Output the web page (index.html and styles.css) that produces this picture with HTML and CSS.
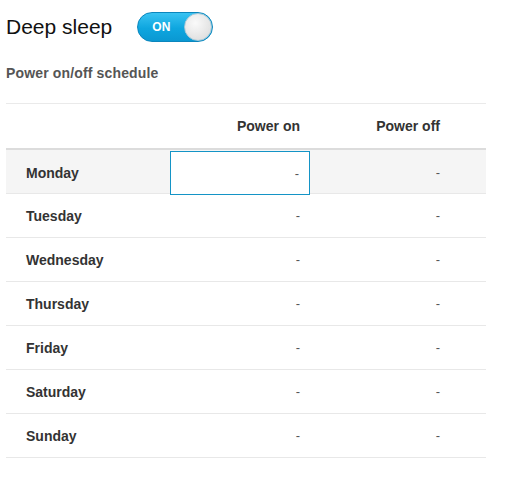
FILE: index.html
```html
<!DOCTYPE html>
<html>
<head>
<meta charset="utf-8">
<link rel="stylesheet" href="styles.css">
</head>
<body>
<div class="page">
  <div class="title-row">
    <span class="title">Deep sleep</span>
    <div class="toggle"><span class="toggle-label">ON</span><span class="knob"></span></div>
  </div>
  <div class="subtitle">Power on/off schedule</div>
  <div class="table">
    <div class="row head">
      <div class="cell day"></div>
      <div class="cell val">Power on</div>
      <div class="cell val">Power off</div>
      <div class="cell"></div>
    </div>
    <div class="row body alt">
      <div class="cell day">Monday</div>
      <div class="cell val selected">-</div>
      <div class="cell val">-</div>
      <div class="cell"></div>
    </div>
    <div class="row body">
      <div class="cell day">Tuesday</div>
      <div class="cell val">-</div>
      <div class="cell val">-</div>
      <div class="cell"></div>
    </div>
    <div class="row body">
      <div class="cell day">Wednesday</div>
      <div class="cell val">-</div>
      <div class="cell val">-</div>
      <div class="cell"></div>
    </div>
    <div class="row body">
      <div class="cell day">Thursday</div>
      <div class="cell val">-</div>
      <div class="cell val">-</div>
      <div class="cell"></div>
    </div>
    <div class="row body">
      <div class="cell day">Friday</div>
      <div class="cell val">-</div>
      <div class="cell val">-</div>
      <div class="cell"></div>
    </div>
    <div class="row body">
      <div class="cell day">Saturday</div>
      <div class="cell val">-</div>
      <div class="cell val">-</div>
      <div class="cell"></div>
    </div>
    <div class="row body">
      <div class="cell day">Sunday</div>
      <div class="cell val">-</div>
      <div class="cell val">-</div>
      <div class="cell"></div>
    </div>
  </div>
</div>
</body>
</html>
```
FILE: styles.css
```css
html, body {
  margin: 0;
  padding: 0;
  background: #fff;
}
body {
  font-family: "Liberation Sans", Arial, sans-serif;
}
.page {
  padding: 12px 19px 0 6px;
}
.title-row {
  display: flex;
  align-items: center;
  height: 30px;
}
.title {
  font-size: 21px;
  color: #111;
  margin-right: 25px;
  line-height: 30px;
}
.toggle {
  box-sizing: border-box;
  width: 76px;
  height: 30px;
  border-radius: 15px;
  background: linear-gradient(#39c3f2, #0ea6df 55%, #0a98d2);
  border: 1px solid #0b86bd;
  display: flex;
  align-items: center;
  justify-content: space-between;
  padding: 0 0 0 14px;
}
.toggle-label {
  color: #fff;
  font-weight: bold;
  font-size: 12px;
  letter-spacing: 0.2px;
}
.knob {
  box-sizing: border-box;
  width: 28px;
  height: 28px;
  border-radius: 50%;
  background: radial-gradient(circle at 40% 35%, #fafafa, #e2e2e2 70%, #d4d4d4);
  border: 1px solid #a9c9d8;
}
.subtitle {
  margin-top: 24px;
  font-size: 14px;
  font-weight: bold;
  color: #555;
  line-height: 15px;
  letter-spacing: 0.15px;
}
.table {
  margin-top: 22px;
  border-top: 1px solid #eaeaea;
}
.row {
  display: grid;
  grid-template-columns: 164px 140px 140px 1fr;
  font-size: 14px;
}
.row.head {
  height: 44px;
  border-bottom: 2px solid #dcdcdc;
  font-weight: bold;
  color: #333;
}
.row.body {
  height: 43px;
  border-bottom: 1px solid #e8e8e8;
}
.row.alt {
  background: #f5f5f5;
}
.cell {
  display: flex;
  align-items: center;
  box-sizing: border-box;
}
.day {
  padding-left: 20px;
  font-weight: bold;
  color: #333;
}
.val {
  justify-content: flex-end;
  padding-right: 10px;
  color: #555;
  font-size: 13px;
}
.head .val {
  color: #333;
  font-size: 14px;
}
.selected {
  background: #fff;
  border: 1px solid #1494c6;
  margin-top: 1px;
  height: 44px;
}
```
